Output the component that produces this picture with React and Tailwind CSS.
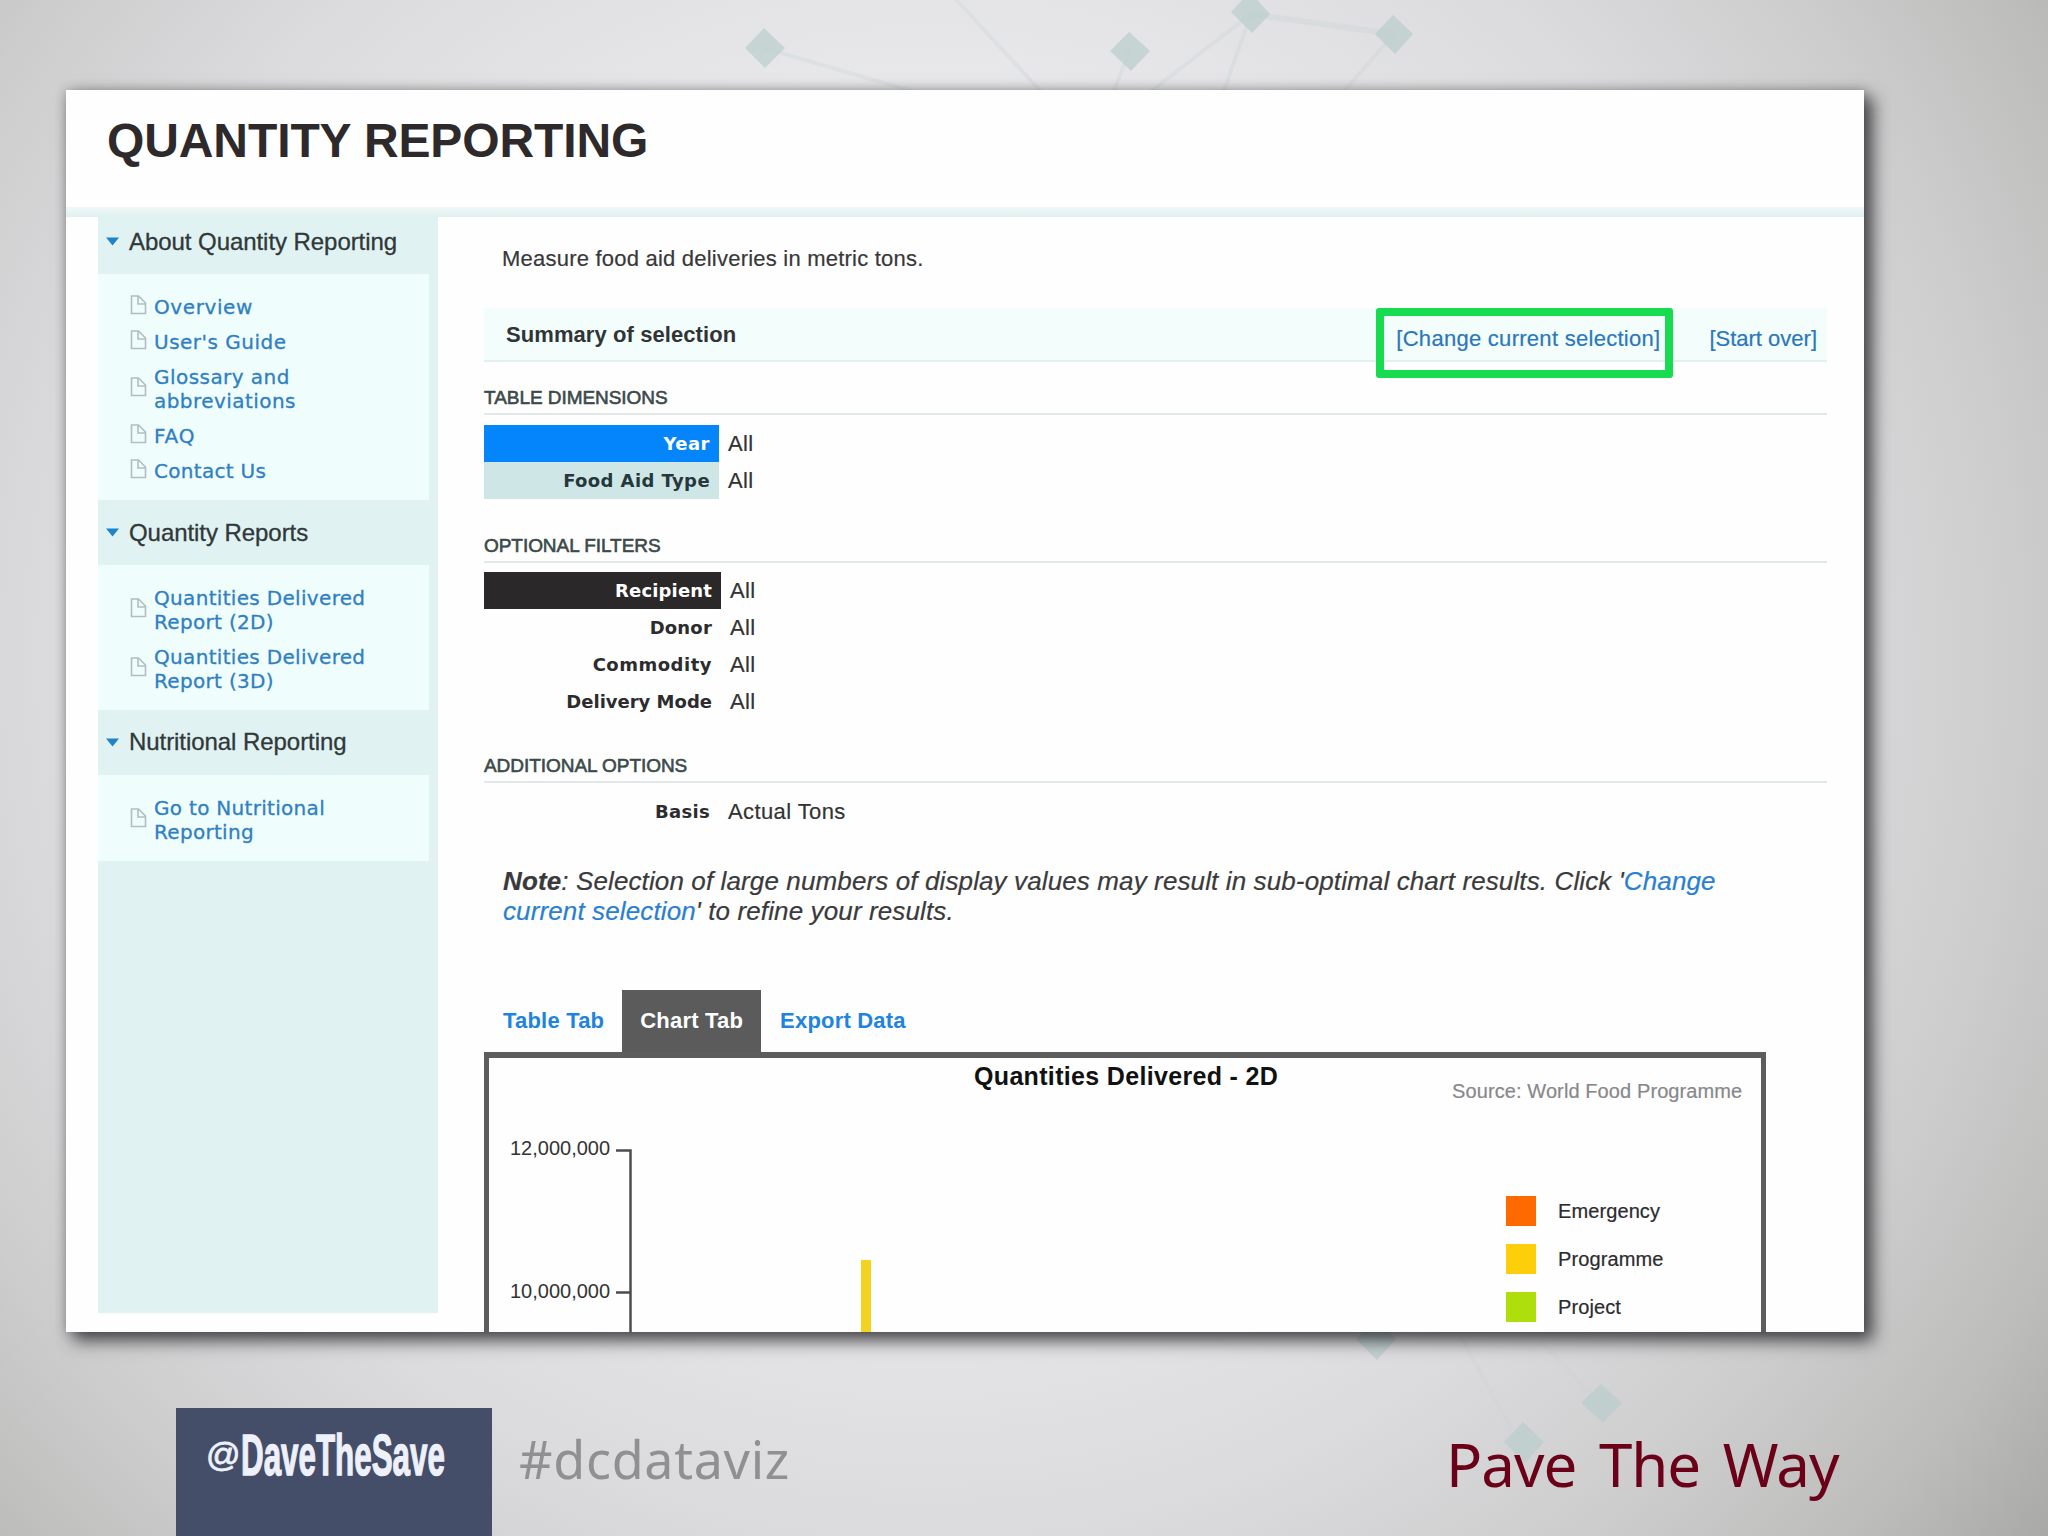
import React from "react";

const sidebarSections = [
  {
    title: "About Quantity Reporting",
    headClass: "h-[57px] pb-2",
    bodyClass: "h-[226px]",
    items: [
      { label: "Overview", className: "h-[35px] tracking-[0.6px]" },
      { label: "User's Guide", className: "h-[35px] tracking-[0.5px]" },
      { label: "Glossary and abbreviations", className: "h-[59px] tracking-[0.45px]" },
      { label: "FAQ", className: "h-[35px] tracking-[0.9px]" },
      { label: "Contact Us", className: "h-[35px] tracking-[0.3px]" },
    ],
  },
  {
    title: "Quantity Reports",
    headClass: "h-[65px]",
    bodyClass: "h-[145px]",
    items: [
      { label: "Quantities Delivered Report (2D)", className: "h-[59px] tracking-[0.32px]" },
      { label: "Quantities Delivered Report (3D)", className: "h-[59px] tracking-[0.32px]" },
    ],
  },
  {
    title: "Nutritional Reporting",
    headClass: "h-[65px] pb-px",
    bodyClass: "h-[86px]",
    items: [{ label: "Go to Nutritional Reporting", className: "h-[59px] tracking-[0.3px]" }],
  },
];

const legend = [
  { label: "Emergency", color: "bg-[#ff6a00]" },
  { label: "Programme", color: "bg-[#fccf0a]" },
  { label: "Project", color: "bg-[#aede0b]" },
];

const PageIcon = () => (
  <svg width="17" height="20" viewBox="0 0 17 20" fill="none" stroke="#b3bdbf" strokeWidth="1.6" className="mb-[3px] shrink-0">
    <path d="M1.5 1H8.5L15.5 8V18.5H1.5Z" />
    <path d="M8 1V9H15.5" />
  </svg>
);

// Faint network of diamonds behind the slide
const Backdrop = () => (
  <svg className="absolute inset-0" width="2048" height="1536" viewBox="0 0 2048 1536">
    <g stroke="#c9d3d4" strokeWidth="4" opacity="0.3" fill="none">
      <path d="M764 48L925 95M951 -6L1045 96M1130 50L1112 96M1251 14L1145 96M1251 14L1222 96M1394 34L1340 96" />
      <path d="M1458 1332L1512 1430M1540 1340L1600 1404" />
      <path d="M1251 14L1394 34" strokeWidth="6" />
    </g>
    <g fill="#b9cfcc" opacity="0.7">
      <path d="M764 28L785 48L765 68L745 48Z" />
      <path d="M1129 32L1150 51L1131 71L1110 51Z" />
      <path d="M1250 -8L1270 14L1252 33L1231 12Z" />
      <path d="M1393 15L1413 34L1395 54L1375 34Z" />
      <path d="M1376 1320L1396 1339L1377 1360L1356 1339Z" />
      <path d="M1601 1384L1622 1403L1603 1423L1581 1403Z" />
      <path d="M1523 1422L1544 1442L1525 1463L1504 1442Z" />
    </g>
  </svg>
);

const SidebarSection = ({ section }) => (
  <div>
    <div className={`flex items-center gap-[10px] pl-2 ${section.headClass}`}>
      <svg width="13" height="9" viewBox="0 0 13 9">
        <path d="M0 0.5H13L6.5 8.5Z" fill="#1f83cb" />
      </svg>
      <span className="text-[24px] leading-none tracking-[-0.06px] text-[#30383a] [-webkit-text-stroke:0.3px_#30383a]">
        {section.title}
      </span>
    </div>
    <div className={`w-[331px] bg-[#f0fdfd] pl-8 pt-[15px] ${section.bodyClass}`}>
      {section.items.map((item) => (
        <div key={item.label} className={`flex items-center gap-[7px] ${item.className}`}>
          <PageIcon />
          <span className="w-[225px] font-['DejaVu_Sans'] text-[20px] leading-[24px] text-[#2f80c3] [-webkit-text-stroke:0.3px_#2f80c3]">
            {item.label}
          </span>
        </div>
      ))}
    </div>
  </div>
);

const GroupTitle = ({ children }) => (
  <h3 className="h-[33px] border-b-2 border-[#e2e8ea] pt-[5px] text-[19px] leading-[22px] tracking-[-0.05px] text-[#3c4a4a] [-webkit-text-stroke:0.6px_#3c4a4a]">
    {children}
  </h3>
);

const Row = ({ label, value, labelClass = "w-[237px] text-[#2c2c2e]" }) => (
  <div className="flex h-[37px] items-center">
    <div className={`flex h-full items-center justify-end pr-[9px] font-['DejaVu_Sans'] text-[18px] font-bold ${labelClass}`}>
      {label}
    </div>
    <span className="pl-[9px] text-[22px] leading-none tracking-[0.4px] text-[#333] [-webkit-text-stroke:0.2px_#333]">
      {value}
    </span>
  </div>
);

const Tab = ({ children, active }) => (
  <div
    className={`flex h-[62px] items-center pb-[2px] text-[22px] font-bold tracking-[0.2px] ${
      active ? "bg-[#5b5b5b] px-[18px] text-white" : "pl-[19px] pr-[18px] text-[#1f84e0]"
    }`}
  >
    {children}
  </div>
);

const Chart = () => (
  <div className="relative h-[282px] w-[1282px] border-x-[5px] border-t-[6px] border-[#5d5c5f]">
    <div className="absolute left-[485px] top-[3px] whitespace-nowrap text-[25px] font-bold leading-[30px] tracking-[0.33px] text-[#111]">
      Quantities Delivered - 2D
    </div>
    <div className="absolute left-[963px] top-[21px] whitespace-nowrap text-[20px] leading-[24px] tracking-[0.1px] text-[#88888a] [-webkit-text-stroke:0.2px_#88888a]">
      Source: World Food Programme
    </div>
    <svg className="absolute left-0 top-0" width="700" height="276" fill="none">
      <path d="M127 92.5H141.5V276M127 234.5H142" stroke="#4c4c50" strokeWidth="2.5" />
      <path d="M377 202V276" stroke="#f4d320" strokeWidth="10" />
    </svg>
    <div className="absolute left-[21px] top-[78px] text-[20px] leading-[24px] text-[#333]">12,000,000</div>
    <div className="absolute left-[21px] top-[221px] text-[20px] leading-[24px] text-[#333]">10,000,000</div>
    <div className="absolute left-[1017px] top-[138px] flex flex-col gap-[18px]">
      {legend.map((item) => (
        <div key={item.label} className="flex h-[30px] items-center gap-[22px]">
          <div className={`h-[30px] w-[30px] ${item.color}`} />
          <span className="text-[20px] leading-none tracking-[0.1px] text-[#2b2b30] [-webkit-text-stroke:0.2px_#2b2b30]">
            {item.label}
          </span>
        </div>
      ))}
    </div>
  </div>
);

export default function App() {
  return (
    <div className="relative h-[1536px] w-[2048px] overflow-hidden bg-[radial-gradient(circle_at_925px_660px,#f2f2f4_0px,#e7e7e9_600px,#dbdadc_880px,#cecdce_1090px,#bcbcba_1280px,#a8a8a6_1430px)] font-['Liberation_Sans',sans-serif]">
      <Backdrop />
      <div className="relative flex h-full flex-col pl-[66px] pt-[90px]">
        <div className="h-[1242px] w-[1798px] shrink-0 overflow-hidden bg-[#fefefe] shadow-[8px_8px_16px_1px_rgba(40,40,44,0.8),0_0_10px_rgba(60,60,60,0.3)]">
          <header className="h-[117px] pl-[41px] pt-[23px]">
            <h1 className="text-[48px] font-bold leading-[56px] tracking-[-0.1px] text-[#2e2a2c]">QUANTITY REPORTING</h1>
          </header>
          <div className="h-[10px] bg-linear-to-b from-[#f0f8f8] to-[#dff1ef]" />

          <div className="flex pl-8">
            <aside className="h-[1096px] w-[340px] shrink-0 bg-[#e1f2f2]">
              {sidebarSections.map((section) => (
                <SidebarSection key={section.title} section={section} />
              ))}
            </aside>

            <main className="ml-[46px] w-[1343px]">
              <p className="h-[91px] pl-[18px] pt-[29px] text-[22px] leading-[26px] tracking-[0.22px] text-[#38383a] [-webkit-text-stroke:0.2px_#38383a]">
                Measure food aid deliveries in metric tons.
              </p>

              {/* Summary bar */}
              <div className="relative flex h-[54px] items-center justify-between border-b-2 border-[#e4f0f0] bg-[#f2fdfc] pl-[22px] pr-[10px] text-[22px]">
                <span className="font-bold tracking-[0.08px] text-[#303436]">Summary of selection</span>
                <div className="flex gap-[49px] pt-2 text-[#2a77bb] [-webkit-text-stroke:0.2px_#2a77bb]">
                  <span className="tracking-[0.28px]">[Change current selection]</span>
                  <span>[Start over]</span>
                </div>
                <div className="absolute left-[892px] top-0 h-[70px] w-[297px] rounded-[3px] border-[8px] border-[#17dc50]" />
              </div>

              <div className="pt-[20px]">
                <GroupTitle>TABLE DIMENSIONS</GroupTitle>
              </div>
              <div className="pt-[10px]">
                <Row label="Year" value="All" labelClass="w-[235px] bg-[#0485fb] tracking-[0.5px] text-white" />
                <Row label="Food Aid Type" value="All" labelClass="w-[235px] bg-[#cfe6e7] tracking-[0.4px] text-[#26383c]" />
              </div>

              <div className="pt-[31px]">
                <GroupTitle>OPTIONAL FILTERS</GroupTitle>
              </div>
              <div className="pt-[9px]">
                <Row label="Recipient" value="All" labelClass="w-[237px] bg-[#2b2829] tracking-[0.15px] text-white" />
                <Row label="Donor" value="All" labelClass="w-[237px] tracking-[0.2px] text-[#2c2c2e]" />
                <Row label="Commodity" value="All" labelClass="w-[237px] tracking-[0.5px] text-[#2c2c2e]" />
                <Row label="Delivery Mode" value="All" />
              </div>

              <div className="pt-[30px]">
                <GroupTitle>ADDITIONAL OPTIONS</GroupTitle>
              </div>
              <div className="pt-[10px]">
                <Row label="Basis" value="Actual Tons" labelClass="w-[235px] tracking-[0.3px] text-[#2c2c2e]" />
              </div>

              <p className="h-[160px] pl-[19px] pt-[36px] text-[26px] italic leading-[30px] tracking-[0.12px] text-[#3a3a3c] [-webkit-text-stroke:0.2px_currentColor]">
                <b>Note</b>: Selection of large numbers of display values may result in sub-optimal chart results. Click '
                <span className="text-[#2a80d0]">
                  Change
                  <br />
                  current selection
                </span>
                ' to refine your results.
              </p>

              <div className="flex">
                <Tab>Table Tab</Tab>
                <Tab active>Chart Tab</Tab>
                <Tab>Export Data</Tab>
              </div>
              <Chart />
            </main>
          </div>
        </div>

        {/* Slide footer */}
        <footer className="mt-[76px] flex h-[128px] pl-[110px]">
          <div className="flex h-full w-[316px] bg-[#444e69] pl-[30px] pt-[14px] text-[#eef1fb]">
            <span className="w-[35px] pt-[12px] text-[34px] leading-[40px] [-webkit-text-stroke:0.8px_#eef1fb]">@</span>
            <div className="w-0">
              <div className="w-max origin-left scale-x-[0.55] text-[57px] font-bold leading-[66px] [-webkit-text-stroke:1.4px_#eef1fb]">
                DaveTheSave
              </div>
            </div>
          </div>
          <div className="ml-[27px] w-[927px] pt-[16px] font-['Noto_Sans'] text-[52px] leading-[70px] tracking-[0.7px] text-[#909092]">
            #dcdataviz
          </div>
          <div className="whitespace-nowrap pt-[16px] font-['Noto_Sans'] text-[60px] leading-[80px] tracking-[-1px] text-[#6b0019] [word-spacing:8px]">
            Pave The Way
          </div>
        </footer>
      </div>
    </div>
  );
}
